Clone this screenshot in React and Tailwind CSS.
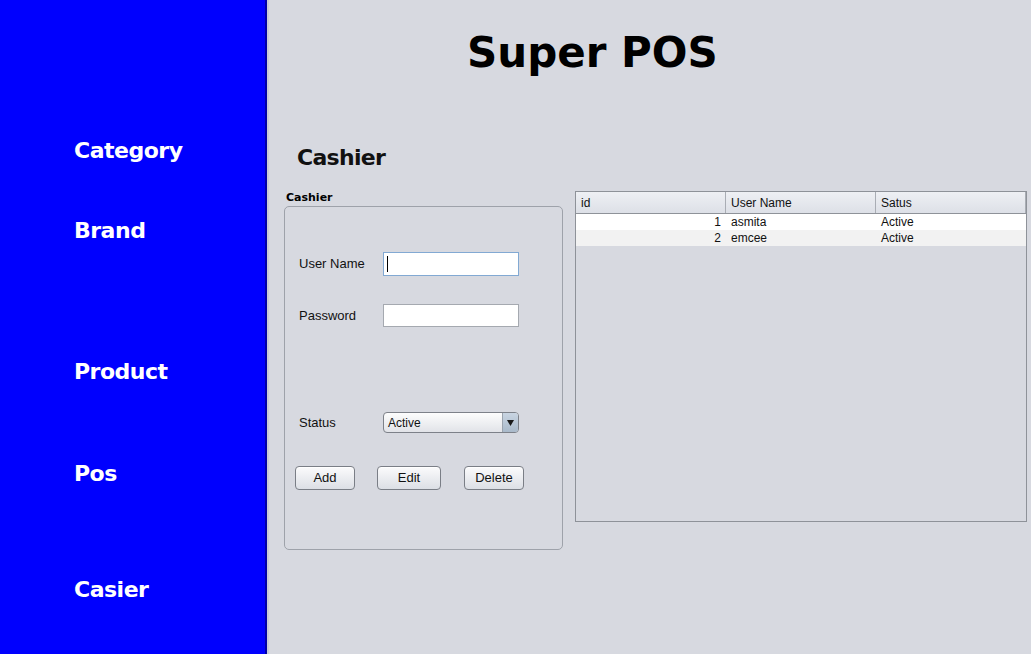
const sidebarItems = [
  { label: 'Category', cls: 'mt-[140px]' },
  { label: 'Brand', cls: 'mt-[58px]' },
  { label: 'Product', cls: 'mt-[119px]' },
  { label: 'Pos', cls: 'mt-[80px]' },
  { label: 'Casier', cls: 'mt-[94px]' },
];

const rows = [
  { id: 1, name: 'asmita', status: 'Active' },
  { id: 2, name: 'emcee', status: 'Active' },
];

const bold = { fontFamily: '"DejaVu Sans", Verdana, sans-serif' };
const small = { fontFamily: '"Liberation Sans", Arial, sans-serif' };

const Button = ({ children, w }) => (
  <div
    className={`${w} h-[24px] flex items-center justify-center rounded-[4px] border border-[#7a7e86] bg-gradient-to-b from-[#fbfbfc] to-[#dcdfe5] text-[13px] text-[#111] shadow-[inset_0_1px_0_#fff]`}
  >
    {children}
  </div>
);

const App = () => {
  return (
    <div className="flex w-[1031px] h-[654px] overflow-hidden bg-[#d7d9e0]">
      {/* Sidebar */}
      <aside className="w-[267px] shrink-0 h-full bg-[#0000fe] border-r-2 border-[#0000a6] flex flex-col pl-[74px]" style={bold}>
        {sidebarItems.map((item) => (
          <div key={item.label} className={`${item.cls} h-[22px] text-[22px] leading-none font-bold text-white tracking-[-0.5px]`}>
            {item.label}
          </div>
        ))}
      </aside>

      {/* Main */}
      <main className="flex-1 flex flex-col border-l-2 border-[#c9ccd6]">
        <h1 className="pt-[32px] pl-[198px] text-[42px] leading-none font-bold text-black" style={bold}>
          Super POS
        </h1>

        <h2 className="mt-[73px] pl-[28px] text-[22px] leading-none font-bold text-[#111] tracking-[-0.7px]" style={bold}>
          Cashier
        </h2>

        <div className="mt-[22px] pl-[15px] flex items-start" style={small}>
          {/* Form panel */}
          <div className="flex flex-col">
            <div className="h-[15px] pt-[1px] pl-[2px] text-[11px] leading-none font-bold text-black" style={bold}>
              Cashier
            </div>
            <div className="w-[279px] h-[344px] rounded-[5px] border-[1.5px] border-[#9ea2aa] pt-[45px] text-[13px] text-[#111]">
              <div className="flex items-center h-[24px] pl-[14px]">
                <span className="w-[84px]">User Name</span>
                <div className="w-[136px] h-[24px] bg-white border-[1.5px] border-[#82a9d3] flex items-center pl-[3px]">
                  <span className="w-[1px] h-[16px] bg-black" />
                </div>
              </div>
              <div className="flex items-center h-[23px] mt-[28px] pl-[14px]">
                <span className="w-[84px]">Password</span>
                <div className="w-[136px] h-[23px] bg-white border border-[#a5a9b0]" />
              </div>
              <div className="flex items-center h-[21px] mt-[85px] pl-[14px]">
                <span className="w-[84px]">Status</span>
                <div className="w-[136px] h-[21px] rounded-[4px] border border-[#7d8189] bg-gradient-to-b from-[#fdfdfd] to-[#e1e3e8] flex items-center overflow-hidden">
                  <span className="flex-1 pl-[4px] text-[12px]">Active</span>
                  <span className="w-[16px] h-full bg-gradient-to-b from-[#c9d5e2] to-[#a9b9ca] border-l border-[#9aa3ae] flex items-center justify-center">
                    <svg width="7" height="6" viewBox="0 0 7 6">
                      <path d="M0 0h7L3.5 6z" fill="#1a1a1a" />
                    </svg>
                  </span>
                </div>
              </div>
              <div className="flex items-center mt-[33px] pl-[10px]">
                <Button w="w-[60px]">Add</Button>
                <div className="ml-[22px]">
                  <Button w="w-[64px]">Edit</Button>
                </div>
                <div className="ml-[23px]">
                  <Button w="w-[60px]">Delete</Button>
                </div>
              </div>
            </div>
          </div>

          {/* Table */}
          <div className="ml-[12px] w-[452px] h-[331px] border border-[#8e9299] bg-[#d7d9e0] text-[12px] text-[#111] flex flex-col">
            <div className="flex h-[22px] bg-gradient-to-b from-[#eef0f4] to-[#dde0e7] border-b border-[#8e9299]">
              <div className="w-[150px] pl-[5px] flex items-center border-r border-[#a9adb4]">id</div>
              <div className="w-[150px] pl-[5px] flex items-center border-r border-[#a9adb4]">User Name</div>
              <div className="flex-1 pl-[5px] flex items-center border-r border-[#a9adb4]">Satus</div>
            </div>
            {rows.map((r, i) => (
              <div key={r.id} className={`flex h-[16px] items-center ${i % 2 === 0 ? 'bg-white' : 'bg-[#f2f2f2]'}`}>
                <div className="w-[150px] pr-[5px] text-right">{r.id}</div>
                <div className="w-[150px] pl-[5px]">{r.name}</div>
                <div className="flex-1 pl-[5px]">{r.status}</div>
              </div>
            ))}
          </div>
        </div>
      </main>
    </div>
  );
};

export default App;
